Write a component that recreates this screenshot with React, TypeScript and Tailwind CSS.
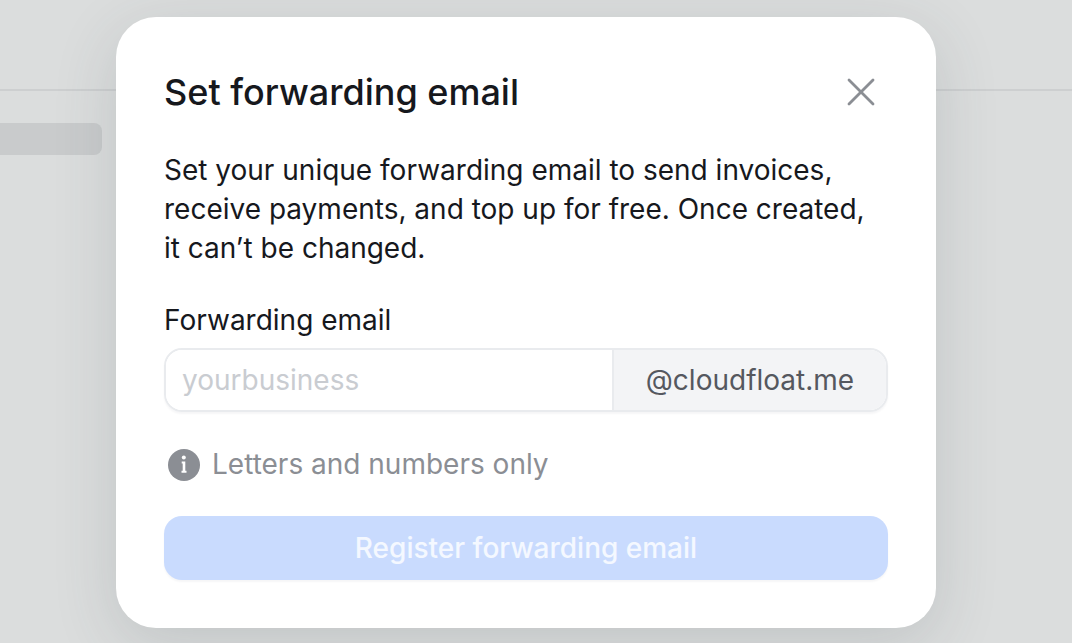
import React from 'react';
import { X } from 'lucide-react';

export default function App() {
  return (
    <div className="relative h-[643px] w-[1072px] overflow-hidden bg-[#dbdddd] font-['Inter',sans-serif]">
      {/* page behind the overlay */}
      <div className="h-[91px] border-b-2 border-[#cdcfd0]" />
      <div className="mt-[32px] h-[32px] w-[102px] rounded-r-lg bg-[#c9cbcc]" />

      {/* modal */}
      <div className="absolute left-[116px] top-[17px] flex h-[611px] w-[820px] flex-col rounded-[40px] bg-white px-[48px] pt-[48px] shadow-[0_16px_64px_rgba(55,70,75,0.16)]">
        <div className="flex h-[54px] items-center justify-between">
          <h2 className="text-[36px] font-medium leading-[54px] text-[#16181d]">Set forwarding email</h2>
          <X className="mr-[3px] h-[48px] w-[48px] text-[#8b8e94]" strokeWidth={1.4} />
        </div>

        <p className="mt-[32px] text-[28px] leading-[39px] text-[#16181d]">
          Set your unique forwarding email to send invoices,
          <br />
          receive payments, and top up for free. Once created,
          <br />
          it can’t be changed.
        </p>

        <label className="mt-[33px] text-[28px] leading-[39px] text-[#16181d]">Forwarding email</label>

        <div className="mt-[8px] flex h-[64px] w-[724px] overflow-hidden rounded-[18px] border-2 border-[#e9ebee] shadow-[0_2px_2px_rgba(20,30,50,0.04)]">
          <div className="flex flex-1 items-center border-r-2 border-[#e9ebee] bg-white pl-[16px] text-[28px] text-[#c9ccd1]">
            yourbusiness
          </div>
          <div className="flex w-[272px] items-center justify-center bg-[#f3f4f6] text-[28px] text-[#55585f]">
            @cloudfloat.me
          </div>
        </div>

        <div className="mt-[33px] flex h-[39px] items-center">
          <svg className="ml-[4px] h-[32px] w-[32px]" viewBox="0 0 32 32">
            <circle cx="16" cy="16" r="16" fill="#8b8e94" />
            <circle cx="15.8" cy="8.6" r="2" fill="#fff" />
            <path d="M13.7 12.6h3.6v9.2h1.2v1.9h-5v-1.9h1.2v-7.3h-1z" fill="#fff" />
          </svg>
          <span className="ml-[12px] text-[28px] leading-[39px] text-[#8b8e94]">Letters and numbers only</span>
        </div>

        <button className="mt-[32px] flex h-[64px] w-[724px] items-center justify-center rounded-[18px] bg-[#c9dbfe] text-[28px] font-medium text-white/80 shadow-[0_2px_2px_rgba(20,30,50,0.04)]">
          Register forwarding email
        </button>
      </div>
    </div>
  );
}
